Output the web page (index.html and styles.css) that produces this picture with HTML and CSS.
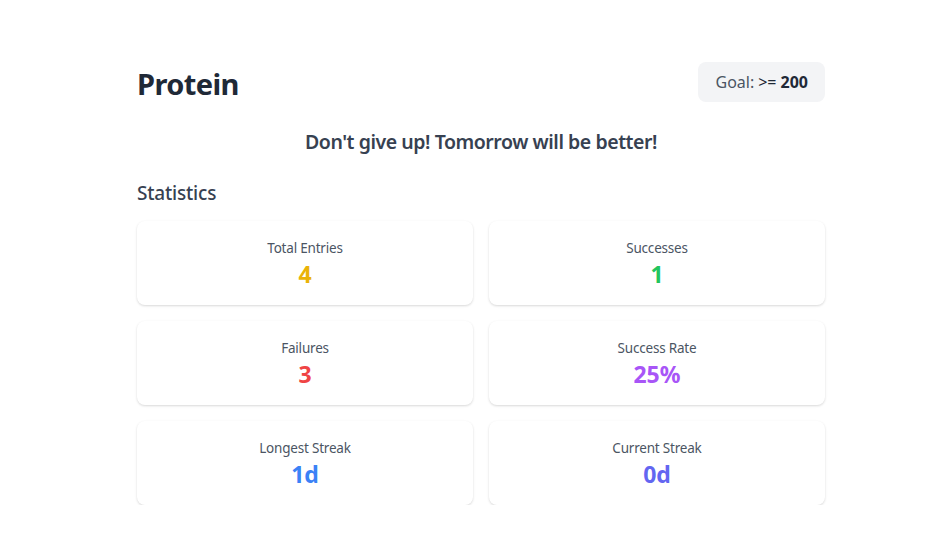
FILE: index.html
```html
<!DOCTYPE html>
<html lang="en">
<head>
<meta charset="utf-8">
<title>Protein</title>
<link rel="stylesheet" href="styles.css">
</head>
<body>
<main class="page">
  <header class="head">
    <h1 class="title">Protein</h1>
    <div class="goal">Goal: <span class="goal-op">&gt;=</span> <strong>200</strong></div>
  </header>
  <p class="motto">Don't give up! Tomorrow will be better!</p>
  <h2 class="section">Statistics</h2>
  <section class="grid">
    <div class="card"><div class="label">Total Entries</div><div class="value yellow">4</div></div>
    <div class="card"><div class="label">Successes</div><div class="value green">1</div></div>
    <div class="card"><div class="label">Failures</div><div class="value red">3</div></div>
    <div class="card"><div class="label">Success Rate</div><div class="value purple">25%</div></div>
    <div class="card"><div class="label">Longest Streak</div><div class="value blue">1d</div></div>
    <div class="card"><div class="label">Current Streak</div><div class="value indigo">0d</div></div>
  </section>
</main>
</body>
</html>
```
FILE: styles.css
```css
* { box-sizing: border-box; }
html, body { margin: 0; padding: 0; background: #ffffff; }
body { font-family: "Noto Sans", "Open Sans", sans-serif; color: #1f2937; }
.page { width: 688px; margin-left: 137px; padding-top: 62px; }
.head { display: flex; justify-content: space-between; align-items: center; height: 40px; }
.title { margin: 0; font-size: 29px; font-weight: 700; color: #1f2937; line-height: 40px; letter-spacing: -0.6px; padding-top: 3px; }
.goal { background: #f3f4f6; border-radius: 8px; height: 40px; padding: 0 17px; display: flex; align-items: center; gap: 4px; font-size: 16px; color: #4b5563; }
.goal strong { color: #1f2937; font-weight: 700; }
.goal-op { color: #1f2937; }
.motto { margin: 26px 0 0; text-align: center; font-size: 19.5px; font-weight: 600; color: #374151; line-height: 28px; letter-spacing: -0.45px; }
.section { margin: 23px 0 0; font-size: 19px; font-weight: 500; color: #374151; line-height: 28px; letter-spacing: -0.2px; }
.grid { margin-top: 14px; display: grid; grid-template-columns: 1fr 1fr; column-gap: 16px; row-gap: 16px; }
.card { background: #fff; border-radius: 8px; box-shadow: 0 1px 3px rgba(0,0,0,0.1), 0 1px 2px rgba(0,0,0,0.06); height: 84px; display: flex; flex-direction: column; align-items: center; justify-content: center; padding-top: 2px; }
.label { font-size: 13.5px; color: #4b5563; line-height: 20px; letter-spacing: -0.2px; }
.value { font-size: 23px; font-weight: 700; line-height: 32px; }
.yellow { color: #eab308; }
.green { color: #22c55e; }
.red { color: #ef4444; }
.purple { color: #a855f7; }
.blue { color: #3b82f6; }
.indigo { color: #6366f1; }
```
